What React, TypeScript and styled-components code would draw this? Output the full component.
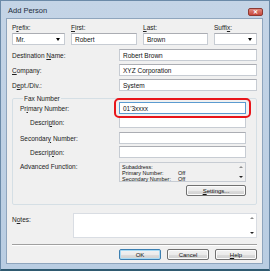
import React from "react";
import styled, { createGlobalStyle } from "styled-components";

const Global = createGlobalStyle`
  html, body { margin: 0; padding: 0; background: #fff; }
  body { font-family: "Liberation Sans", Arial, sans-serif; font-size: 6.5px; color: #222; }
  * { box-sizing: border-box; }
`;

const Window = styled.div`
  width: 270px;
  height: 271px;
  background: linear-gradient(#c4d4e6, #b9cde2);
  border: 1px solid #6b8aa8;
  border-bottom: 2px solid #2f5a70;
  display: flex;
  flex-direction: column;
  padding: 0 6px 5px 5px;
`;

const TitleBar = styled.div`
  height: 17px;
  display: flex;
  align-items: center;
  justify-content: space-between;
  padding: 2px 0 0 2px;
  font-size: 7.5px;
  color: #1e2d3c;
`;

const CloseBtn = styled.div`
  width: 15px;
  height: 8px;
  margin-top: 3px;
  background: linear-gradient(#e08a80, #c9473b);
  border: 1px solid #8c3a33;
  border-radius: 2px;
  display: flex;
  align-items: center;
  justify-content: center;
  color: #fff;
  font-size: 6px;
  font-weight: bold;
  line-height: 1;
`;

const Client = styled.div`
  flex: 1;
  background: #f0f0f0;
  border: 1px solid #8fa5bd;
  padding: 5px 5px 0 5px;
  display: flex;
  flex-direction: column;
`;

const NameRow = styled.div`
  display: grid;
  grid-template-columns: 53px 66px 65px 43px;
  column-gap: 6px;
`;

const Field = styled.div`
  display: flex;
  flex-direction: column;
  gap: 2px;
`;

const Label = styled.span<{ $indent?: number; $top?: number }>`
  white-space: nowrap;
  padding-left: ${(p) => p.$indent ?? 0}px;
  margin-top: ${(p) => p.$top ?? 0}px;
  align-self: ${(p) => (p.$top !== undefined ? "start" : "auto")};
  line-height: 7px;
`;

const Input = styled.div`
  height: 12px;
  width: 100%;
  background: #fff;
  border: 1px solid #c7ccd3;
  border-top-color: #abadb3;
  padding: 0 3px;
  display: flex;
  align-items: center;
  justify-content: space-between;
  white-space: nowrap;
  color: #111;
`;

const Arrow = styled.span`
  width: 0;
  height: 0;
  border-left: 2.5px solid transparent;
  border-right: 2.5px solid transparent;
  border-top: 3px solid #000;
  margin-right: 1px;
`;

const FormRow = styled.div<{ $mt?: number }>`
  display: grid;
  grid-template-columns: 107px 1fr;
  align-items: center;
  margin-top: ${(p) => p.$mt ?? 3}px;
`;

const Group = styled.fieldset`
  margin: 4px 0 0 0;
  padding: 0 10px 8px 7px;
  border: 1px solid #d5dfe5;
  border-radius: 2px;
  min-width: 0;
  legend {
    padding: 0 1px;
    margin-left: 3px;
    line-height: 7px;
  }
`;

const GroupRow = styled.div<{ $mt?: number }>`
  display: grid;
  grid-template-columns: 99px 1fr;
  align-items: center;
  margin-top: ${(p) => p.$mt ?? 2}px;
`;

const Highlight = styled.div`
  position: relative;
  &::after {
    content: "";
    position: absolute;
    left: -5px;
    right: -5px;
    top: -4px;
    bottom: -4px;
    border: 2px solid #e8151a;
    border-radius: 5px;
  }
`;

const FocusInput = styled(Input)`
  border-color: #5b9bd0;
`;

const ListBox = styled.div`
  height: 20px;
  background: #f0f0f0;
  border: 1px solid #c7ccd3;
  display: flex;
  align-self: start;
`;

const ListText = styled.div`
  flex: 1;
  padding: 1px 2px;
  font-size: 5.5px;
  line-height: 6px;
  display: grid;
  grid-template-columns: 56px 1fr;
  color: #111;
`;

const ScrollCol = styled.div`
  width: 8px;
  display: flex;
  flex-direction: column;
  justify-content: space-between;
  align-items: center;
  padding: 3px 0 3px;
`;

const TinyArrow = styled.span<{ $up?: boolean }>`
  width: 0;
  height: 0;
  border-left: 2px solid transparent;
  border-right: 2px solid transparent;
  ${(p) => (p.$up ? "border-bottom: 2px solid #8a8a8a;" : "border-top: 2px solid #222;")}
`;

const Button = styled.div<{ $default?: boolean; $w?: number }>`
  width: ${(p) => p.$w ?? 42}px;
  height: 11px;
  border: 1px solid ${(p) => (p.$default ? "#3c7fb1" : "#707070")};
  border-radius: 2px;
  background: linear-gradient(#f2f2f2 0%, #ebebeb 50%, #dddddd 51%, #cfcfcf 100%);
  box-shadow: inset 0 0 0 1px ${(p) => (p.$default ? "#a8dbf5" : "#fbfbfb")};
  display: flex;
  align-items: center;
  justify-content: center;
  font-size: 6px;
  color: #111;
`;

const SettingsRow = styled.div`
  display: flex;
  justify-content: flex-end;
  margin-top: 3px;
`;

const NotesRow = styled.div`
  display: grid;
  grid-template-columns: 61px 1fr;
  margin-top: 8px;
`;

const NotesBox = styled.div`
  height: 25px;
  background: #fff;
  border: 1px solid #d9dde3;
  display: flex;
  justify-content: flex-end;
`;

const Separator = styled.div`
  height: 2px;
  border-top: 1px solid #a0a0a0;
  border-bottom: 1px solid #fff;
  margin-top: 6px;
`;

const ButtonBar = styled.div`
  display: flex;
  justify-content: flex-end;
  gap: 6px;
  margin-top: 3px;
`;

const U = styled.u`
  text-decoration: underline;
`;

export default function App() {
  return (
    <>
      <Global />
      <Window>
        <TitleBar>
          <span>Add Person</span>
          <CloseBtn>✕</CloseBtn>
        </TitleBar>
        <Client>
          <NameRow>
            <Field>
              <Label>P<U>r</U>efix:</Label>
              <Input>Mr.<Arrow /></Input>
            </Field>
            <Field>
              <Label><U>F</U>irst:</Label>
              <Input>Robert</Input>
            </Field>
            <Field>
              <Label><U>L</U>ast:</Label>
              <Input>Brown</Input>
            </Field>
            <Field>
              <Label>Suffi<U>x</U>:</Label>
              <Input><span /><Arrow /></Input>
            </Field>
          </NameRow>
          <FormRow $mt={4}>
            <Label>Destination <U>N</U>ame:</Label>
            <Input>Robert Brown</Input>
          </FormRow>
          <FormRow>
            <Label><U>C</U>ompany:</Label>
            <Input>XYZ Corporation</Input>
          </FormRow>
          <FormRow>
            <Label>D<U>e</U>pt./Div.:</Label>
            <Input>System</Input>
          </FormRow>
          <Group>
            <legend>Fax Number</legend>
            <GroupRow $mt={0}>
              <Label>Pr<U>i</U>mary Number:</Label>
              <Highlight>
                <FocusInput>01'3xxxx</FocusInput>
              </Highlight>
            </GroupRow>
            <GroupRow>
              <Label $indent={10}>Descri<U>p</U>tion:</Label>
              <Input />
            </GroupRow>
            <GroupRow $mt={4}>
              <Label>Secondar<U>y</U> Number:</Label>
              <Input />
            </GroupRow>
            <GroupRow>
              <Label $indent={10}>Descrip<U>t</U>ion:</Label>
              <Input />
            </GroupRow>
            <GroupRow $mt={4}>
              <Label $top={1}>Advanced Function:</Label>
              <ListBox>
                <ListText>
                  <span>Subaddress:</span><span />
                  <span>Primary Number:</span><span>Off</span>
                  <span>Secondary Number:</span><span>Off</span>
                </ListText>
                <ScrollCol>
                  <TinyArrow $up />
                  <TinyArrow />
                </ScrollCol>
              </ListBox>
            </GroupRow>
            <SettingsRow>
              <Button $w={60}><U>S</U>ettings...</Button>
            </SettingsRow>
          </Group>
          <NotesRow>
            <Label $top={3}>N<U>o</U>tes:</Label>
            <NotesBox>
              <ScrollCol>
                <TinyArrow $up />
                <TinyArrow />
              </ScrollCol>
            </NotesBox>
          </NotesRow>
          <Separator />
          <ButtonBar>
            <Button $default>OK</Button>
            <Button>Cancel</Button>
            <Button><U>H</U>elp</Button>
          </ButtonBar>
        </Client>
      </Window>
    </>
  );
}
